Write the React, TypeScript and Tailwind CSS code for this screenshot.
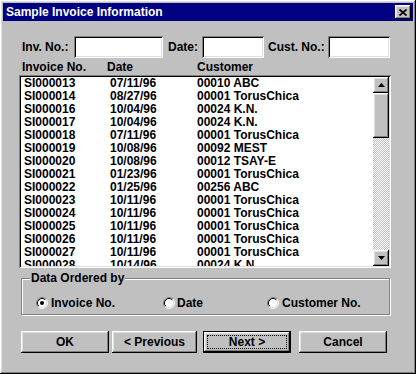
import React from 'react';

const rows = [
  ['SI000013', '07/11/96', '00010 ABC'],
  ['SI000014', '08/27/96', '00001 TorusChica'],
  ['SI000016', '10/04/96', '00024 K.N.'],
  ['SI000017', '10/04/96', '00024 K.N.'],
  ['SI000018', '07/11/96', '00001 TorusChica'],
  ['SI000019', '10/08/96', '00092 MEST'],
  ['SI000020', '10/08/96', '00012 TSAY-E'],
  ['SI000021', '01/23/96', '00001 TorusChica'],
  ['SI000022', '01/25/96', '00256 ABC'],
  ['SI000023', '10/11/96', '00001 TorusChica'],
  ['SI000024', '10/11/96', '00001 TorusChica'],
  ['SI000025', '10/11/96', '00001 TorusChica'],
  ['SI000026', '10/11/96', '00001 TorusChica'],
  ['SI000027', '10/11/96', '00001 TorusChica'],
  ['SI000028', '10/14/96', '00024 K.N.'],
];

// win95 bevels
const raised = 'shadow-[inset_-1px_-1px_#000,inset_1px_1px_#fff,inset_-2px_-2px_#808080,inset_2px_2px_#dfdfdf]';
const sunken = 'shadow-[inset_1px_1px_#808080,inset_-1px_-1px_#fff,inset_2px_2px_#000,inset_-2px_-2px_#dfdfdf]';

function Radio({ checked }: { checked?: boolean }) {
  return (
    <svg width="12" height="12" viewBox="0 0 12 12" className="shrink-0">
      <circle cx="6" cy="6" r="4.5" fill="#fff" />
      <path d="M2.11 9.89 A5.5 5.5 0 0 1 9.89 2.11" stroke="#808080" fill="none" />
      <path d="M9.89 2.11 A5.5 5.5 0 0 1 2.11 9.89" stroke="#fff" fill="none" />
      <path d="M2.82 9.18 A4.5 4.5 0 0 1 9.18 2.82" stroke="#000" fill="none" />
      <path d="M9.18 2.82 A4.5 4.5 0 0 1 2.82 9.18" stroke="#dfdfdf" fill="none" />
      {checked && <circle cx="6" cy="6" r="2" fill="#000" />}
    </svg>
  );
}

function Arrow({ up }: { up?: boolean }) {
  return (
    <svg width="7" height="4" viewBox="0 0 7 4">
      <path d={up ? 'M0 4 L3.5 0 L7 4 Z' : 'M0 0 L7 0 L3.5 4 Z'} fill="#000" />
    </svg>
  );
}

function Field({ w }: { w: string }) {
  return <div className={`h-[22px] bg-white ${sunken} ${w}`} />;
}

function Button({ label, w, isDefault }: { label: string; w: string; isDefault?: boolean }) {
  if (isDefault) {
    return (
      <div className={`h-[22px] border border-black ${w}`}>
        <div className={`h-full ${raised} p-[3px]`}>
          <div className="h-full border border-dotted border-black flex items-center justify-center">
            {label}
          </div>
        </div>
      </div>
    );
  }
  return <div className={`h-[22px] ${raised} flex items-center justify-center ${w}`}>{label}</div>;
}

export default function App() {
  return (
    <div
      className={`w-[416px] h-[374px] bg-[#c0c0c0] p-[3px] flex flex-col text-[12px] font-bold text-black font-['Liberation_Sans',Arial,sans-serif] ${raised}`}
    >
      {/* Title bar */}
      <div className="h-[18px] bg-[#000080] flex items-center pl-[3px] pr-[2px]">
        <span className="text-white text-[12px] leading-none">Sample Invoice Information</span>
        <div className={`ml-auto w-[16px] h-[14px] bg-[#c0c0c0] ${raised} flex items-center justify-center`}>
          <svg width="8" height="7" viewBox="0 0 8 7">
            <path d="M0.5 0.5 L7.5 6.5 M7.5 0.5 L0.5 6.5" stroke="#000" strokeWidth="1.7" />
          </svg>
        </div>
      </div>

      {/* Search fields */}
      <div className="mt-[15px] ml-[19px] flex items-center h-[22px]">
        <span className="w-[52px]">Inv. No.:</span>
        <Field w="w-[89px]" />
        <span className="w-[39px] pl-[5px]">Date:</span>
        <Field w="w-[62px]" />
        <span className="w-[64px] pl-[4px]">Cust. No.:</span>
        <Field w="w-[62px]" />
      </div>

      {/* Column headers */}
      <div className="mt-[2px] ml-[19px] h-[14px] leading-[14px] flex">
        <span className="w-[85px]">Invoice No.</span>
        <span className="w-[90px]">Date</span>
        <span>Customer</span>
      </div>

      {/* List box */}
      <div className={`mt-[1px] ml-[16px] w-[372px] h-[193px] bg-white p-[2px] flex ${sunken}`}>
        <div className="flex-1 overflow-hidden pl-[3px]">
          {rows.map((r) => (
            <div key={r[0]} className="grid grid-cols-[86px_87px_1fr] h-[13px] leading-[13px] whitespace-nowrap">
              <span>{r[0]}</span>
              <span>{r[1]}</span>
              <span>{r[2]}</span>
            </div>
          ))}
        </div>
        <div className="w-[16px] flex flex-col">
          <div className={`h-[16px] bg-[#c0c0c0] ${raised} flex items-center justify-center`}>
            <Arrow up />
          </div>
          <div className={`h-[45px] bg-[#c0c0c0] ${raised}`} />
          <div className="flex-1 bg-[image:repeating-conic-gradient(#fff_0_25%,#c0c0c0_0_50%)] bg-[length:2px_2px]" />
          <div className={`h-[16px] bg-[#c0c0c0] ${raised} flex items-center justify-center`}>
            <Arrow />
          </div>
        </div>
      </div>

      {/* Sort order group */}
      <div className="mt-[10px] ml-[18px] w-[369px] h-[37px] relative border border-[#808080] shadow-[inset_1px_1px_#fff,1px_1px_#fff]">
        <span className="absolute left-[8px] top-[-8px] px-[1px] bg-[#c0c0c0] leading-[14px]">Data Ordered by</span>
        <div className="flex items-center pt-[15px] pl-[14px] h-full">
          <div className="w-[127px] flex items-center pt-0 self-start gap-[3px]">
            <Radio checked />
            <span>Invoice No.</span>
          </div>
          <div className="w-[104px] flex items-center self-start gap-[2px]">
            <Radio />
            <span>Date</span>
          </div>
          <div className="flex items-center self-start gap-[3px]">
            <Radio />
            <span>Customer No.</span>
          </div>
        </div>
      </div>

      {/* Buttons */}
      <div className="mt-[16px] ml-[18px] flex">
        <Button label="OK" w="w-[88px]" />
        <div className="ml-[3px]">
          <Button label="< Previous" w="w-[85px]" />
        </div>
        <div className="ml-[6px]">
          <Button label="Next >" w="w-[88px]" isDefault />
        </div>
        <div className="ml-[8px]">
          <Button label="Cancel" w="w-[88px]" />
        </div>
      </div>
    </div>
  );
}
